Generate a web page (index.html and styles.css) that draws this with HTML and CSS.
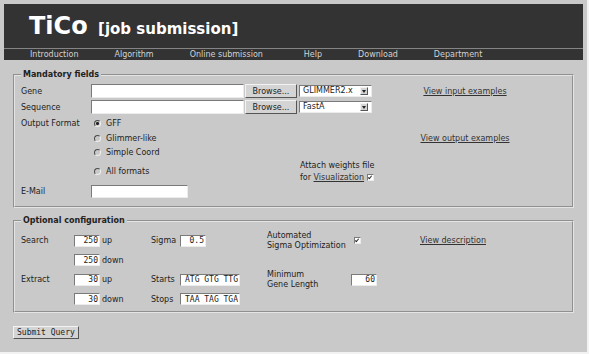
FILE: index.html
```html
<!DOCTYPE html>
<html>
<head>
<meta charset="UTF-8"/>
<title>TiCo [job submission]</title>
<link rel="stylesheet" href="styles.css">
</head>
<body>
<div class="page">

<div class="header">
  <div class="title"><span class="name">TiCo</span> <span class="sub">[job submission]</span></div>
  <div class="nav">
    <a href="#">Introduction</a>
    <a href="#">Algorithm</a>
    <a href="#">Online submission</a>
    <a href="#" class="help">Help</a>
    <a href="#">Download</a>
    <a href="#">Department</a>
  </div>
</div>

<form class="job">
<fieldset>
<legend>Mandatory fields</legend>
<div class="mand">
  <span>Gene</span>
  <span class="file"><input type="text" class="text path"><button type="button" class="btn">Browse...</button></span>
  <span class="combo"><span class="value">GLIMMER2.x</span><span class="arrow"><svg width="4" height="3" viewBox="0 0 4 3"><path d="M0 0H4L2 3Z" fill="#222"/></svg></span></span>
  <span class="ex"><a href="#">View input examples</a></span>

  <span>Sequence</span>
  <span class="file"><input type="text" class="text path"><button type="button" class="btn">Browse...</button></span>
  <span class="combo"><span class="value">FastA</span><span class="arrow"><svg width="4" height="3" viewBox="0 0 4 3"><path d="M0 0H4L2 3Z" fill="#222"/></svg></span></span>

  <span class="c1">Output Format</span>
  <label class="opt"><input type="radio" name="fmt" checked>GFF</label>
  <label class="opt c2"><input type="radio" name="fmt">Glimmer-like</label>
  <span class="ex c4"><a href="#">View output examples</a></span>
  <label class="opt c2"><input type="radio" name="fmt">Simple Coord</label>
  <label class="opt c2"><input type="radio" name="fmt">All formats</label>
  <span class="attach">Attach weights file<br>for <a href="#">Visualization</a> <input type="checkbox" checked></span>

  <span class="c1">E-Mail</span>
  <span><input type="text" class="text mail"></span>
</div>
</fieldset>

<fieldset class="optional">
<legend>Optional configuration</legend>
<div class="conf">
  <span>Search</span>
  <input type="text" class="text num" value="250">
  <span class="unit">up</span>
  <span>Sigma</span>
  <span><input type="text" class="text num" value="0.5"></span>
  <span class="pair">Automated<br>Sigma Optimization</span>
  <span><input type="checkbox" class="auto" checked></span>
  <span class="desc"><a href="#">View description</a></span>

  <input type="text" class="text num c2" value="250">
  <span class="unit">down</span>

  <span class="c1">Extract</span>
  <input type="text" class="text num" value="30">
  <span class="unit">up</span>
  <span>Starts</span>
  <input type="text" class="text codons" value="ATG GTG TTG">
  <span class="pair">Minimum<br>Gene Length</span>
  <input type="text" class="text num" value="60">

  <input type="text" class="text num c2" value="30">
  <span class="unit">down</span>
  <span>Stops</span>
  <input type="text" class="text codons" value="TAA TAG TGA">
</div>
</fieldset>

<button type="submit" class="btn submit">Submit Query</button>
</form>

</div>
</body>
</html>
```

FILE: styles.css
```css
html {
    background: #f2f2f2;
}
body {
    margin: 0;
    font-family: "DejaVu Sans", Verdana, sans-serif;
    font-size: 8px;
    color: #222;
}
a {
    color: #333;
}
.page {
    width: 579px;
    height: 344px;
    padding: 4px;
    background: #c9c9c9;
}

/* header */
.header {
    background: #333;
}
.title {
    height: 44px;
    box-sizing: border-box;
    padding: 10px 0 0 25px;
    font-size: 24px;
    line-height: 24px;
    font-weight: bold;
    color: #fff;
    white-space: nowrap;
}
.title .sub {
    font-size: 15px;
    margin-left: 2px;
}
.nav {
    display: flex;
    gap: 36px;
    height: 11px;
    padding-left: 26px;
    border-top: 1px solid #858585;
    line-height: 11px;
}
.nav a {
    color: #d2d2d2;
    text-decoration: none;
}
.nav .help {
    margin-left: 5px;
}

/* form */
.job {
    padding-top: 10px;
}
fieldset {
    margin: 0 9px;
    min-width: 0;
    padding: 3px 6px 7px;
    border: 2px groove #e4e4e4;
}
legend {
    padding: 0 2px;
    font-weight: bold;
    line-height: 10px;
}
.optional {
    margin-top: 8px;
    padding-top: 5px;
    padding-bottom: 2px;
}
.c1 { grid-column: 1; }
.c2 { grid-column: 2; }
.c4 { grid-column: 4; }

.mand {
    display: grid;
    grid-template-columns: 70px 208px 118px 96px;
    grid-template-rows: 16px 16px 17px 13px 15px 23px 16px;
    align-items: center;
}
.conf {
    display: grid;
    grid-template-columns: 53px 26px 51px 29px 60px 111px 27px 150px;
    grid-template-rows: 19px 20px 19px 20px;
    align-items: center;
}
.file {
    display: flex;
    gap: 1px;
}
.ex {
    text-align: center;
}
.attach {
    line-height: 12px;
    padding-left: 1px;
}
.pair {
    padding-left: 27px;
    line-height: 10px;
}
.unit {
    padding-left: 2px;
}
.desc {
    padding-left: 42px;
}

/* controls */
input.text {
    box-sizing: border-box;
    height: 13px;
    margin: 0;
    padding: 0 1px;
    border: 1px solid;
    border-color: #7a7a7a #ececec #ececec #7a7a7a;
    background: #fff;
    font: 8px "DejaVu Sans Mono", monospace;
    color: #222;
    text-align: right;
}
.path {
    width: 153px;
    height: 14px !important;
}
.mail {
    width: 97px;
}
.num {
    width: 26px;
    height: 12px !important;
}
.codons {
    width: 60px;
    height: 12px !important;
}
.btn {
    box-sizing: border-box;
    height: 14px;
    margin: 0;
    padding: 0 4px;
    border: 1px solid;
    border-color: #f2f2f2 #555 #555 #f2f2f2;
    background: #d4d4d4;
    font: 8px "DejaVu Sans", sans-serif;
    color: #222;
}
.file .btn {
    width: 52px;
}
.submit {
    height: 13px;
    margin: 13px 0 0 9px;
    padding: 0 3px;
    font-family: "DejaVu Sans Mono", monospace;
}
.combo {
    display: flex;
    align-items: center;
    box-sizing: border-box;
    width: 73px;
    height: 12px;
    border: 1px solid;
    border-color: #7a7a7a #ececec #ececec #7a7a7a;
    background: #fff;
    line-height: 10px;
}
.combo .value {
    flex: 1;
    padding-left: 3px;
    white-space: nowrap;
}
.combo .arrow {
    display: flex;
    align-items: center;
    justify-content: center;
    box-sizing: border-box;
    width: 8px;
    height: 8px;
    margin-right: 3px;
    border: 1px solid;
    border-color: #f2f2f2 #555 #555 #f2f2f2;
    background: #d4d4d4;
}
.opt {
    display: flex;
    align-items: center;
    gap: 5px;
    padding-left: 3px;
}
input[type=radio] {
    appearance: none;
    box-sizing: border-box;
    width: 7px;
    height: 7px;
    margin: 0;
    border: 1px solid;
    border-color: #4a4a4a #eeeeee #eeeeee #4a4a4a;
    border-radius: 50%;
    background: #c9c9c9;
}
input[type=radio]:checked {
    background: radial-gradient(circle, #222 1.2px, #c9c9c9 1.8px);
}
input[type=checkbox] {
    appearance: none;
    position: relative;
    box-sizing: border-box;
    width: 7px;
    height: 7px;
    margin: 0;
    vertical-align: middle;
    border: 1px solid;
    border-color: #7a7a7a #ececec #ececec #7a7a7a;
    background: #fff;
}
input[type=checkbox]:checked::after {
    content: "";
    position: absolute;
    left: 1px;
    top: 0;
    width: 1px;
    height: 3px;
    border: solid #222;
    border-width: 0 1px 1px 0;
    transform: rotate(40deg);
}
.auto {
    margin-left: 3px !important;
}
```
